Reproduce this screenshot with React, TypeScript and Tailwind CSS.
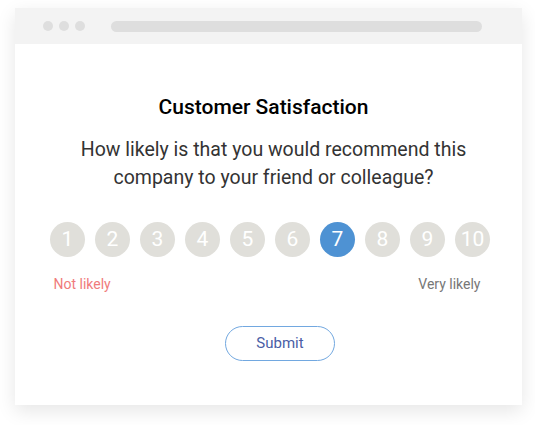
const scores = [1, 2, 3, 4, 5, 6, 7, 8, 9, 10];

export default function App() {
  const selected = 7;

  return (
    <div className="w-[535px] h-[425px] bg-white pt-2 pl-[15px] font-['Roboto',sans-serif]">
      <div className="w-[507px] h-[397px] bg-white shadow-[0_6px_18px_rgba(0,0,0,0.10)] flex flex-col">
        {/* browser chrome */}
        <div className="h-9 bg-[#f3f3f3] flex items-center pl-7 pr-[40px] gap-[6px]">
          <span className="w-[10px] h-[10px] rounded-full bg-[#dedede]" />
          <span className="w-[10px] h-[10px] rounded-full bg-[#dedede]" />
          <span className="w-[10px] h-[10px] rounded-full bg-[#dedede]" />
          <span className="flex-1 h-[11px] rounded-full bg-[#dedede] ml-[20px]" />
        </div>

        <div className="flex flex-col items-center pt-[49px]">
          <h1 className="text-[21px] leading-7 font-medium text-black pr-[10px]">Customer Satisfaction</h1>
          <p className="mt-[15px] text-[19.5px] leading-7 text-[#333] text-center pl-[10px]">
            How likely is that you would recommend this
            <br />
            company to your friend or colleague?
          </p>

          <div className="mt-[30px] flex gap-[10px] pl-[3px]">
            {scores.map((n) => (
              <span
                key={n}
                className={`w-[35px] h-[35px] rounded-full flex items-center justify-center text-[21px] text-white ${
                  n === selected ? 'bg-[#4e92d3]' : 'bg-[#e0dfda]'
                }`}
              >
                {n}
              </span>
            ))}
          </div>

          <div className="w-[440px] mt-[18px] pl-[5px] pr-[8px] flex justify-between text-[14px] leading-[18px]">
            <span className="text-[#f07b7b]">Not likely</span>
            <span className="text-[#777]">Very likely</span>
          </div>

          <button className="mt-[33px] ml-[23px] w-[110px] h-[35px] rounded-full border border-[#72a8e0] text-[15px] text-[#4a5ea6] bg-white">
            Submit
          </button>
        </div>
      </div>
    </div>
  );
}
